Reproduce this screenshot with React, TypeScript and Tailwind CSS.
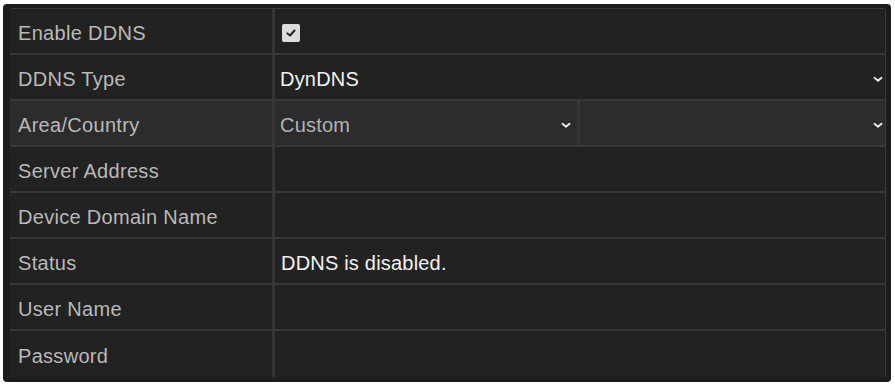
import React from "react";

const Chevron = ({ className = "" }: { className?: string }) => (
  <svg width="10" height="7" viewBox="0 0 10 7" className={className}>
    <path d="M1.5 1.8 L5 4.8 L8.5 1.8" fill="none" stroke="#e8e8e8" strokeWidth="2" strokeLinecap="round" strokeLinejoin="round" />
  </svg>
);

const Row = ({
  label,
  children,
  light = false,
  last = false,
}: {
  label: string;
  children?: React.ReactNode;
  light?: boolean;
  last?: boolean;
}) => (
  <div
    className={`flex h-[46px] ${last ? "" : "border-b-2 border-[#383838]"} ${
      light ? "bg-[#2c2c2c]" : "bg-[#222222]"
    }`}
  >
    <div className="w-[265px] shrink-0 border-r-[3px] border-[#353535] flex items-center pl-[8px] pt-[4px] text-[20px] tracking-[0.3px] text-[#b9b9b9]">
      {label}
    </div>
    <div className="flex-1 flex items-center min-w-0">{children}</div>
  </div>
);

export default function App() {
  return (
    <div
      className="w-[895px] h-[387px] bg-white pt-[4px] pl-[3px]"
      style={{ fontFamily: '"Liberation Sans", Arial, sans-serif' }}
    >
      <div className="w-[888px] h-[378px] bg-[#1c1c1c] rounded-[4px] pl-[7px] pr-[5px] pt-[4px] pb-[4px]">
        <div className="h-full rounded-[3px] border-t border-r border-[#3a3a3a] overflow-hidden bg-[#222222]">
          <Row label="Enable DDNS">
            <div className="ml-[7px] mt-[4px] w-[18px] h-[18px] bg-[#dcdcdc] rounded-[2px] flex items-center justify-center">
              <svg width="12" height="10" viewBox="0 0 12 10">
                <path d="M2.5 5.5 L5 7.5 L9.5 2.5" fill="none" stroke="#2a2a2a" strokeWidth="2.2" strokeLinecap="round" strokeLinejoin="round" />
              </svg>
            </div>
          </Row>
          <Row label="DDNS Type">
            <div className="flex-1 flex items-center justify-between pl-[5px] pr-[2px] pt-[4px]">
              <span className="text-[20px] tracking-[0.2px] text-[#f2f2f2]">DynDNS</span>
              <Chevron />
            </div>
          </Row>
          <Row label="Area/Country" light>
            <div className="h-full w-[305px] shrink-0 border-r-[3px] border-[#363636] flex items-center justify-between pl-[5px] pr-[6px] pt-[4px]">
              <span className="text-[20px] tracking-[0.2px] text-[#b3b3b3]">Custom</span>
              <Chevron />
            </div>
            <div className="h-full flex-1 flex items-center justify-end pr-[2px] pt-[4px]">
              <Chevron />
            </div>
          </Row>
          <Row label="Server Address" />
          <Row label="Device Domain Name" />
          <Row label="Status">
            <span className="pl-[6px] pt-[4px] text-[20px] tracking-[0.2px] text-[#f2f2f2]">DDNS is disabled.</span>
          </Row>
          <Row label="User Name" />
          <Row label="Password" last />
        </div>
      </div>
    </div>
  );
}
